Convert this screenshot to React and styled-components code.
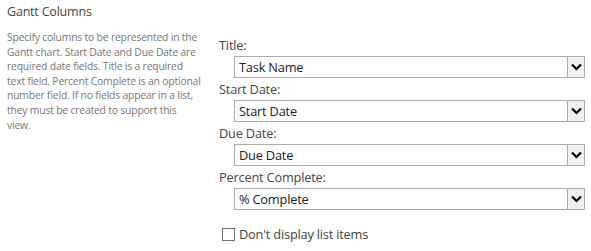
import React from "react";
import styled, { createGlobalStyle } from "styled-components";

const Global = createGlobalStyle`
  html, body { margin: 0; padding: 0; background: #fff; }
  body { font-family: "Open Sans", "Noto Sans", sans-serif; }
`;

const Page = styled.div`
  display: grid;
  grid-template-columns: 212px 1fr;
  width: 591px;
  height: 251px;
  box-sizing: border-box;
  padding: 3px 7px 0 7px;
`;

const Side = styled.div`
  display: flex;
  flex-direction: column;
`;

const Heading = styled.h3`
  margin: 0;
  font-weight: normal;
  font-size: 12.5px;
  line-height: 18px;
  color: #444;
  letter-spacing: -0.2px;
`;

const Description = styled.p`
  margin: 9px 0 0 0;
  font-size: 10.4px;
  line-height: 14.6px;
  color: #777;
  letter-spacing: -0.2px;
  width: 205px;
  white-space: nowrap;
`;

const Fields = styled.div`
  display: flex;
  flex-direction: column;
  padding-top: 31px;
`;

const Label = styled.div`
  font-size: 12.8px;
  line-height: 22px;
  color: #444;
  letter-spacing: -0.2px;
`;

const Select = styled.div`
  display: flex;
  align-items: stretch;
  box-sizing: border-box;
  height: 22px;
  margin-left: 15px;
  width: 351px;
  border: 1px solid #ababab;
  background: #fff;
`;

const Value = styled.div`
  flex: 1;
  padding-left: 4px;
  font-size: 12.8px;
  line-height: 20px;
  color: #222;
  letter-spacing: -0.2px;
`;

const ArrowButton = styled.div`
  width: 17px;
  box-sizing: border-box;
  border-left: 1px solid #ababab;
  background: #f0f0f0;
  display: flex;
  align-items: center;
  justify-content: center;
`;

const CheckRow = styled.label`
  display: flex;
  align-items: center;
  gap: 4px;
  margin-top: 15px;
  margin-left: 3px;
  font-size: 12.8px;
  color: #444;
  letter-spacing: -0.2px;
`;

const Box = styled.span`
  width: 13px;
  height: 13px;
  box-sizing: border-box;
  border: 1px solid #707070;
  background: #fff;
`;

const Chevron = () => (
  <svg width="11" height="8" viewBox="0 0 11 8">
    <path d="M1 1.5 L5.5 6 L10 1.5" fill="none" stroke="#000" strokeWidth="2.2" />
  </svg>
);

const fields = [
  ["Title:", "Task Name"],
  ["Start Date:", "Start Date"],
  ["Due Date:", "Due Date"],
  ["Percent Complete:", "% Complete"],
];

const descLines = [
  "Specify columns to be represented in the",
  "Gantt chart. Start Date and Due Date are",
  "required date fields. Title is a required",
  "text field. Percent Complete is an optional",
  "number field. If no fields appear in a list,",
  "they must be created to support this",
  "view.",
];

export default function App() {
  return (
    <>
      <Global />
      <Page>
        <Side>
          <Heading>Gantt Columns</Heading>
          <Description>
            {descLines.map((l, i) => (
              <React.Fragment key={i}>
                {l}
                {i < descLines.length - 1 && <br />}
              </React.Fragment>
            ))}
          </Description>
        </Side>
        <Fields>
          {fields.map(([label, value]) => (
            <React.Fragment key={label}>
              <Label>{label}</Label>
              <Select>
                <Value>{value}</Value>
                <ArrowButton>
                  <Chevron />
                </ArrowButton>
              </Select>
            </React.Fragment>
          ))}
          <CheckRow>
            <Box />
            Don't display list items
          </CheckRow>
        </Fields>
      </Page>
    </>
  );
}
